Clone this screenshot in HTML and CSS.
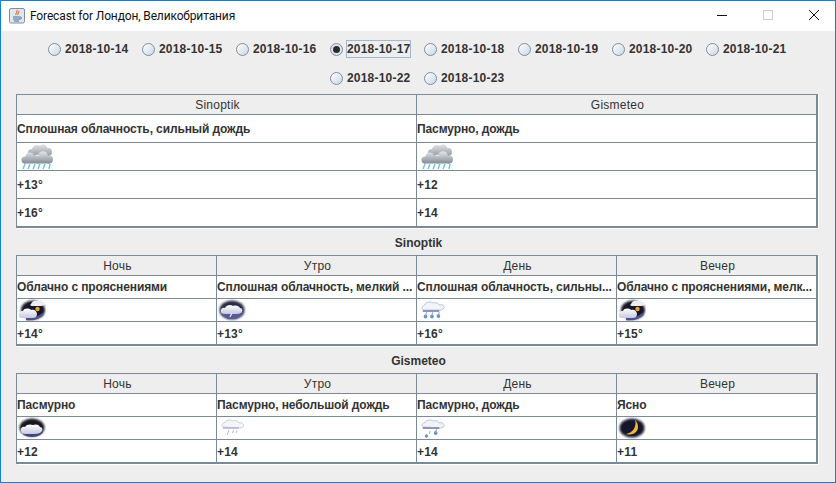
FILE: index.html
```html
<!DOCTYPE html>
<html lang="ru">
<head>
<meta charset="utf-8">
<title>Forecast</title>
<link rel="stylesheet" href="styles.css">
</head>
<body>
<svg class="defs" width="0" height="0" aria-hidden="true">
  <defs>
    <filter id="soft" x="-20%" y="-20%" width="140%" height="140%"><feGaussianBlur stdDeviation="0.45"/></filter>
    <filter id="halo" x="-30%" y="-30%" width="160%" height="160%"><feGaussianBlur stdDeviation="1"/></filter>
    <linearGradient id="grey" gradientUnits="userSpaceOnUse" x1="0" y1="0" x2="0" y2="13"><stop offset="0" stop-color="#e2e5e8"/><stop offset="1" stop-color="#8f979f"/></linearGradient>
    <linearGradient id="grey2" gradientUnits="userSpaceOnUse" x1="0" y1="8" x2="0" y2="20"><stop offset="0" stop-color="#dfe3e6"/><stop offset="1" stop-color="#7f8891"/></linearGradient>
    <linearGradient id="pale" x1="0" y1="0" x2="0" y2="1"><stop offset="0" stop-color="#fff"/><stop offset="1" stop-color="#c6c8e0"/></linearGradient>
    <symbol id="storm" viewBox="0 0 34 26">
      <g filter="url(#soft)">
        <g fill="url(#grey)"><circle cx="12" cy="9" r="4"/><circle cx="17" cy="6" r="5"/><circle cx="23" cy="5" r="4.5"/><circle cx="28" cy="8" r="4"/></g>
        <path d="M5 20l-2 5M10 20l-2 5M15 20l-2 5M20 20l-2 5M25 20l-2 5M30 20l-1 5M21 13l-3 7" stroke="#6cc0e6" stroke-width="1.4" fill="none"/>
        <g fill="url(#grey2)"><circle cx="5" cy="16" r="3.6"/><circle cx="10" cy="13" r="4.6"/><circle cx="16" cy="15" r="3.6"/><circle cx="23" cy="12" r="4.8"/><circle cx="29" cy="15.500" r="4"/><rect x="4" y="15" width="26" height="4.500"/></g>
      </g>
    </symbol>
    <symbol id="night-overcast" viewBox="0 0 28 22">
      <ellipse cx="14" cy="10.500" rx="12.500" ry="9" fill="#15151f" filter="url(#halo)"/>
      <path d="M3 14a11 6 0 0 0 22 0z" fill="#45457c" filter="url(#soft)"/>
      <path d="M3 14c-1-3 2-5 4-4 1-3 6-3 8-2 2-1 6-1 7 2 2 0 3 2 2 4-1 2-4 3-8 3H7c-3 0-4-1-4-3z" fill="url(#pale)" filter="url(#soft)"/>
    </symbol>
    <symbol id="night-cloudy" viewBox="0 0 28 22">
      <ellipse cx="15" cy="11" rx="12" ry="9.500" fill="#181826" filter="url(#halo)"/>
      <path d="M8 20c6 1 12-1 17-5" stroke="#50508a" stroke-width="2.500" fill="none" filter="url(#soft)"/>
      <circle cx="19.500" cy="10" r="2.200" fill="#e8a72c" filter="url(#soft)"/>
      <path d="M13 5c1-3 4-4 6-3 2-1 4-1 5 1 2 0 3 1 3 2s-2 2-4 2h-9c-2 0-2-2-1-2z" fill="#eeeef4" filter="url(#soft)"/>
      <path d="M1 17c-1-3 1-5 4-5 1-3 6-3 8-1 3-1 6 1 6 4s-2 4-4 4H4c-2 0-3-1-3-2z" fill="url(#pale)" filter="url(#soft)"/>
    </symbol>
    <symbol id="night-drizzle" viewBox="0 0 28 22">
      <ellipse cx="14" cy="11" rx="12.500" ry="9.500" fill="#2a2a44" filter="url(#halo)"/>
      <path d="M3 13a11 7 0 0 0 22 0z" fill="#5a5a98" filter="url(#soft)"/>
      <path d="M3 13c-1-3 2-5 4-4 1-3 6-4 8-2 3-1 6 0 7 2 2 0 3 2 2 4-1 1-3 2-6 2H7c-3 0-4-1-4-2z" fill="url(#pale)" filter="url(#soft)"/>
      <path d="M14 14l-2 4" stroke="#e6e6f4" stroke-width="1.300"/>
    </symbol>
    <symbol id="rain" viewBox="0 0 28 22">
      <g filter="url(#soft)" transform="translate(2 0) scale(.92 1)">
        <path d="M4 11c-3-1-2-4 1-5 1-3 7-4 9-2 3-1 6 0 7 2 3-1 6 1 5 3-1 2-3 2-5 2z" fill="#f4f5fa" stroke="#aab0cc" stroke-width=".8"/>
        <path d="M3 12h18" stroke="#9096b8" stroke-width="2"/>
        <circle cx="6" cy="17.500" r="2" fill="#6f8fc8"/><circle cx="13" cy="17.500" r="2" fill="#6f8fc8"/><circle cx="20" cy="17" r="2" fill="#6f8fc8"/>
        <path d="M7 13l-1 4M14 13l-1 4M21 13l-1 3" stroke="#8fa4cc"/>
      </g>
    </symbol>
    <symbol id="light-rain" viewBox="0 0 28 22">
      <g filter="url(#soft)" transform="translate(2 0) scale(.9 1)">
        <path d="M4 10c-3-1-2-4 1-4 1-3 7-4 9-2 3-1 6 0 7 2 3-1 6 1 5 3-1 2-3 2-5 2z" fill="#f4f4fa" stroke="#c0c2da" stroke-width=".8"/>
        <path d="M3 11h18" stroke="#b4b6d0" stroke-width="1.600"/>
        <path d="M10 13l-2 5M15 13l-1 3M19 13l-1 3" stroke="#b0b4cc"/>
      </g>
    </symbol>
    <symbol id="steady-rain" viewBox="0 0 28 22">
      <g filter="url(#soft)" transform="translate(2 0) scale(.92 1)">
        <path d="M4 10c-3-1-2-4 1-4 1-3 7-4 9-2 3-1 6 0 7 2 3-1 6 1 5 3-1 2-3 2-5 2z" fill="#f2f3f8" stroke="#aab0cc" stroke-width=".8"/>
        <path d="M3 11h18" stroke="#9096b8" stroke-width="2"/>
        <circle cx="17" cy="16" r="2" fill="#6f8fc8"/><circle cx="7" cy="19" r="1.800" fill="#6f8fc8"/>
        <path d="M11 14l-1 3M18 12l-1 3" stroke="#8fa4cc"/>
      </g>
    </symbol>
    <symbol id="moon" viewBox="0 0 28 22">
      <ellipse cx="14" cy="11" rx="12.500" ry="9.500" fill="#12122a" filter="url(#halo)"/>
      <path d="M17 3c2 6-2 13-9 14 7 2 12-2 12-7 0-3-1-5-3-7z" fill="#eeb63e" filter="url(#soft)"/>
    </symbol>
  </defs>
</svg>
<div class="window">
  <header class="titlebar">
    <svg class="app-icon" viewBox="0 0 16 16" aria-hidden="true">
      <rect x=".5" y=".5" width="15" height="14.500" rx="1.500" fill="#dfe6ee" stroke="#7f8fa3"/>
      <path d="M8 2c1 2-2 3-1 5M10 3c0 2-2 2-1 4" stroke="#e2702a" stroke-width="1.100" fill="none"/>
      <path d="M4 9h7M4 11h7M5 13h5" stroke="#4b6c96" stroke-width="1"/>
      <path d="M11 9c2 0 2 2 0 2" stroke="#4b6c96" fill="none"/>
    </svg>
    <span class="title">Forecast for Лондон, Великобритания</span>
    <div class="controls">
      <svg class="ctl" viewBox="0 0 46 30" aria-hidden="true"><path d="M20 14.500h10" stroke="#111"/></svg>
      <svg class="ctl" viewBox="0 0 46 30" aria-hidden="true"><rect x="20.500" y="9.500" width="9" height="9" fill="none" stroke="#ccc"/></svg>
      <svg class="ctl" viewBox="0 0 46 30" aria-hidden="true"><path d="M20 9l10 10M30 9l-10 10" stroke="#111" fill="none"/></svg>
    </div>
  </header>
  <main class="content">
    <div class="dates">
      <label class="date"><span class="radio"></span><span class="dlabel">2018-10-14</span></label>
      <label class="date"><span class="radio"></span><span class="dlabel">2018-10-15</span></label>
      <label class="date"><span class="radio"></span><span class="dlabel">2018-10-16</span></label>
      <label class="date"><span class="radio radio-on"></span><span class="dlabel dlabel-focus">2018-10-17</span></label>
      <label class="date"><span class="radio"></span><span class="dlabel">2018-10-18</span></label>
      <label class="date"><span class="radio"></span><span class="dlabel">2018-10-19</span></label>
      <label class="date"><span class="radio"></span><span class="dlabel">2018-10-20</span></label>
      <label class="date"><span class="radio"></span><span class="dlabel">2018-10-21</span></label>
      <label class="date"><span class="radio"></span><span class="dlabel">2018-10-22</span></label>
      <label class="date"><span class="radio"></span><span class="dlabel">2018-10-23</span></label>
    </div>

    <section class="grid grid-2">
      <div class="cell head">Sinoptik</div><div class="cell head">Gismeteo</div>
      <div class="cell">Сплошная облачность, сильный дождь</div><div class="cell">Пасмурно, дождь</div>
      <div class="cell"><svg class="icon-big"><use href="#storm"/></svg></div><div class="cell"><svg class="icon-big"><use href="#storm"/></svg></div>
      <div class="cell temp">+13°</div><div class="cell temp">+12</div>
      <div class="cell temp">+16°</div><div class="cell temp">+14</div>
    </section>

    <h2 class="section-title">Sinoptik</h2>
    <section class="grid grid-4">
      <div class="cell head">Ночь</div><div class="cell head">Утро</div><div class="cell head">День</div><div class="cell head">Вечер</div>
      <div class="cell"><span class="clip">Облачно с прояснениями</span></div><div class="cell"><span class="clip">Сплошная облачность, мелкий ...</span></div><div class="cell"><span class="clip">Сплошная облачность, сильны...</span></div><div class="cell"><span class="clip">Облачно с прояснениями, мелк...</span></div>
      <div class="cell"><svg class="icon"><use href="#night-cloudy"/></svg></div><div class="cell"><svg class="icon"><use href="#night-drizzle"/></svg></div><div class="cell"><svg class="icon"><use href="#rain"/></svg></div><div class="cell"><svg class="icon"><use href="#night-cloudy"/></svg></div>
      <div class="cell temp">+14°</div><div class="cell temp">+13°</div><div class="cell temp">+16°</div><div class="cell temp">+15°</div>
    </section>

    <h2 class="section-title">Gismeteo</h2>
    <section class="grid grid-4">
      <div class="cell head">Ночь</div><div class="cell head">Утро</div><div class="cell head">День</div><div class="cell head">Вечер</div>
      <div class="cell">Пасмурно</div><div class="cell">Пасмурно, небольшой дождь</div><div class="cell">Пасмурно, дождь</div><div class="cell">Ясно</div>
      <div class="cell"><svg class="icon"><use href="#night-overcast"/></svg></div><div class="cell"><svg class="icon"><use href="#light-rain"/></svg></div><div class="cell"><svg class="icon"><use href="#steady-rain"/></svg></div><div class="cell"><svg class="icon"><use href="#moon"/></svg></div>
      <div class="cell temp">+12</div><div class="cell temp">+14</div><div class="cell temp">+14</div><div class="cell temp">+11</div>
    </section>
  </main>
</div>
</body>
</html>
```
FILE: styles.css
```css
* { box-sizing: border-box; }
html, body { margin: 0; padding: 0; }
body { width: 836px; height: 483px; overflow: hidden; background: #eeeeee; font-family: "Liberation Sans", Arial, sans-serif; }
.defs { position: absolute; }
.window { width: 836px; height: 483px; border: 1px solid #0f82d6; display: flex; flex-direction: column; background: #eeeeee; }
.titlebar { height: 30px; flex: none; background: #fff; display: flex; align-items: center; padding-left: 8px; }
.app-icon { width: 16px; height: 16px; flex: none; }
.title { margin-left: 5px; font: 12px Roboto, "Noto Sans", sans-serif; color: #111; letter-spacing: -.14px; }
.controls { margin-left: auto; display: flex; }
.ctl { width: 46px; height: 30px; display: block; }
.content { padding: 5px 15px 0; }
.dates { display: flex; flex-wrap: wrap; justify-content: center; gap: 5px; margin-left: -3px; margin-right: -3px; }
.date { width: 89px; height: 24px; display: flex; align-items: center; padding: 2px 0 0 3.5px; font-size: 12px; font-weight: bold; color: #333; letter-spacing: .2px; }
.radio { width: 13px; height: 13px; flex: none; border-radius: 50%; border: 1px solid #7e8ea0; background: linear-gradient(135deg, #f4f6f9 20%, #cfdbe8 90%); position: relative; }
.radio-on { background: #dfe5ec; }
.radio-on::after { content: ""; position: absolute; left: 2px; top: 2px; width: 7px; height: 7px; border-radius: 50%; background: #2a2a2a; }
.dlabel { margin-left: 3px; border: 1px solid transparent; padding: 1px 0; line-height: 14px; white-space: nowrap; }
.dlabel-focus { border-color: #a3b8cc; }
.grid { display: grid; width: 802px; background: #fff; border: 1px solid #7a8a99; box-shadow: 1px 1px 0 #fff; }
.grid-2 { grid-template-columns: repeat(2, 400px); grid-template-rows: 20px repeat(4, 28px); margin-top: 5px; }
.grid-4 { grid-template-columns: repeat(4, 200px); grid-template-rows: 20px 23px 23px 23px; }
.cell { border-right: 1px solid #7a8a99; border-bottom: 1px solid #7a8a99; padding: 0; display: flex; align-items: center; font-size: 12px; font-weight: bold; color: #333; letter-spacing: -.11px; overflow: hidden; min-width: 0; white-space: nowrap; }
.temp { letter-spacing: .2px; padding-top: 1px; }
.clip { overflow: hidden; white-space: nowrap; }
.head { background: #eeeeee; font-weight: normal; justify-content: center; color: #333; padding: 1px 0 0 2px; letter-spacing: .25px; }
.section-title { margin: 0; height: 27px; display: flex; align-items: center; justify-content: center; font-size: 12px; font-weight: bold; color: #333; padding: 3px 0 0 1px; }
.icon-big { width: 34px; height: 26px; display: block; margin-left: 3px; }
.icon { width: 28px; height: 22px; display: block; margin-left: 1px; }
```
